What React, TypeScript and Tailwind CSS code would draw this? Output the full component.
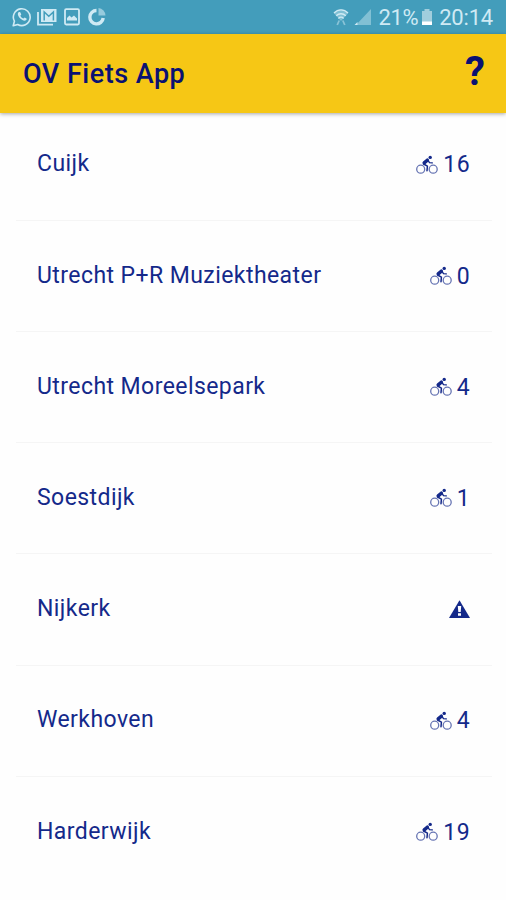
import React from 'react';

interface Station {
    name: string;
    bikes: number | null;
}

const stations: Station[] = [
    { name: 'Cuijk', bikes: 16 },
    { name: 'Utrecht P+R Muziektheater', bikes: 0 },
    { name: 'Utrecht Moreelsepark', bikes: 4 },
    { name: 'Soestdijk', bikes: 1 },
    { name: 'Nijkerk', bikes: null },
    { name: 'Werkhoven', bikes: 4 },
    { name: 'Harderwijk', bikes: 19 },
];

function CyclistIcon() {
    return (
        <svg width="22" height="20" viewBox="0 0 22 20" fill="none" stroke="currentColor">
            <circle cx="4.7" cy="14.2" r="4" strokeWidth="1.3" opacity="0.65" />
            <circle cx="17.2" cy="14.2" r="4" strokeWidth="1.3" opacity="0.65" />
            <circle cx="14.2" cy="2.4" r="1.7" fill="currentColor" stroke="none" />
            <path d="M11.3 5.2 8.2 7.9" strokeWidth="3.5" strokeLinecap="round" />
            <path d="m11.8 5.2 1.7 2.4 2.800.3" strokeWidth="1.4" strokeLinecap="round" />
            <path d="m7.600 9 3.800 2.200-.4 4.600" strokeWidth="1.500" strokeLinecap="round" strokeLinejoin="round" />
        </svg>
    );
}

function WarningIcon() {
    return (
        <svg width="22" height="19" viewBox="0 0 22 19">
            <path d="M11.500.3 22 18H1z" fill="currentColor" />
            <path d="M9.800 6h3.400l-.5 6h-2.400zM10 13.300h3v2.500h-3z" fill="#fff" />
        </svg>
    );
}

function StatusBar() {
    return (
        <div className="flex h-[34px] items-center justify-between bg-[#439dbb] pl-3 pr-[13px] text-[#cfeaf4]">
            <div className="flex items-center gap-[6px]">
                {/* WhatsApp */}
                <svg width="20" height="20" viewBox="0 0 20 20" fill="none" stroke="currentColor">
                    <path d="m1.2 18.8 1.2-4.6a8.4 8.4 0 1 1 3.3 3.3z" strokeWidth="1.6" strokeLinejoin="round" />
                    <path d="M6.6 5.3c-1.7 1.5-.2 4.4 1.7 6.2s4.4 3 5.9 1.5c.6-.6.6-1.2.2-1.5l-1.7-1-1.3 1.1C9.9 11 8.8 9.9 8.3 8.7l1-1.3-.9-2c-.4-.6-1.2-.6-1.8-.1z" fill="currentColor" stroke="none" />
                </svg>
                {/* Gmail */}
                <svg width="20" height="18" viewBox="0 0 20 18" fill="none" stroke="currentColor" className="-ml-[1px]">
                    <path d="M1 4v12.7h15" strokeWidth="1.8" />
                    <path d="M4 1h15.5v13H4z" fill="currentColor" stroke="none" />
                    <path d="M7.2 12.5V4l4.6 4.3L16.4 4v8.5" stroke="#439dbb" strokeWidth="1.5" />
                </svg>
                {/* Gallery */}
                <svg width="16" height="18" viewBox="0 0 16 18" fill="none" stroke="currentColor" className="ml-[1px]">
                    <rect x="1" y="1.2" width="14" height="15.3" rx="1.2" strokeWidth="1.8" />
                    <path d="M3 12.500V10l2.500-2.500 2 2L10 7.500l3 3v2z" fill="currentColor" stroke="none" />
                </svg>
                {/* Data usage */}
                <svg width="20" height="20" viewBox="0 0 20 20" fill="none" stroke="currentColor" className="ml-[1px]">
                    <path d="M9.5 3.500a6.700 6.700 0 1 0 6.700 7.500" strokeWidth="3.4" />
                    <path d="M11.5 8.500V1a7.600 7.600 0 0 1 7 7.500z" fill="currentColor" stroke="none" opacity="0.6" />
                </svg>
            </div>

            <div className="flex items-center">
                {/* Wi-Fi */}
                <svg width="16" height="19" viewBox="0 0 16 19" fill="none" stroke="currentColor">
                    <path d="M1 5.2c4-4.800 10-4.800 14 0L8 13z" fill="currentColor" stroke="none" opacity="0.45" />
                    <path d="M1 5c4-4.200 10-4.200 14 0M3.200 7.800c2.800-2.800 6.800-2.800 9.600 0M5.400 10.400c1.600-1.600 3.600-1.600 5.200 0" strokeWidth="1.4" />
                    <path d="m6.200 12.500-2 4.500M9.800 12.500l2 4.500" strokeWidth="1.8" opacity="0.5" />
                </svg>
                {/* Signal */}
                <svg width="18" height="18" viewBox="0 0 18 18" className="ml-[5px] mr-[7px]" fill="currentColor">
                    <path d="M17 1v16H2z" opacity="0.45" />
                    <path d="M.5 17h3v-3z" />
                </svg>
                <span className="mt-[1px] text-[22px] leading-none tracking-[-0.4px]">21%</span>
                {/* Battery */}
                <svg width="12" height="18" viewBox="0 0 12 18" className="ml-[3px] mr-[6px]">
                    <path d="M3.5 1h5v2H11v14H1V3h2.500z" fill="#a1cedd" />
                    <path d="M1 13.500h10V17H1z" fill="#fff" />
                </svg>
                <span className="mt-[1px] text-[22px] leading-none tracking-[-0.2px]">20:14</span>
            </div>
        </div>
    );
}

function StationRow({ name, bikes }: Station) {
    return (
        <li className="flex h-[111.2px] items-center justify-between border-b border-[#f5f5f5] pl-[21px] pr-[22px] text-[23px] last:border-b-0">
            <span className="tracking-[0.43px]">{name}</span>
            {bikes === null ? (
                <WarningIcon />
            ) : (
                <span className="flex items-center gap-[5px]">
                    <CyclistIcon />
                    <span className="mt-[2px] tracking-[0.4px]">{bikes}</span>
                </span>
            )}
        </li>
    );
}

export default function App() {
    return (
        <div className="flex h-[900px] w-full flex-col overflow-hidden bg-[#fefefe] font-['Roboto',sans-serif] text-[#14298a]">
            <StatusBar />
            <header className="z-10 flex h-[79px] shrink-0 items-center justify-between bg-[#f6c715] pl-[23px] pr-[21px] text-[#0a1172] shadow-[0_1px_4px_rgba(0,0,0,0.35)]">
                <h1 className="mt-[1px] text-[27px] font-medium tracking-[0.5px]">OV Fiets App</h1>
                <span className="mb-1 text-[40px] font-bold leading-none">?</span>
            </header>
            <ul className="-mt-[3.4px] pl-4 pr-[14px]">
                {stations.map((station) => (
                    <StationRow key={station.name} {...station} />
                ))}
            </ul>
        </div>
    );
}
